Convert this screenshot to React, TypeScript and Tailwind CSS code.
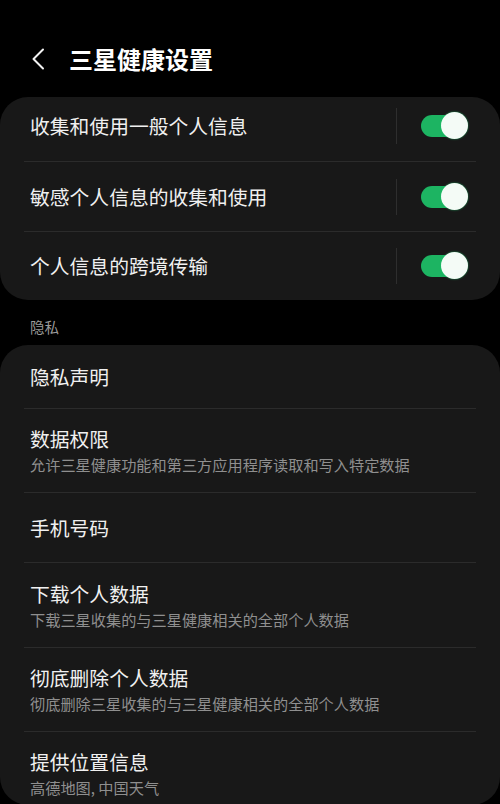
import React from "react";

const font = { fontFamily: '"Noto Sans CJK SC", "Noto Sans", sans-serif' };

function Toggle() {
  return (
    <div className="relative w-[46px] h-[26px] flex items-center">
      <div className="w-[44px] h-[22px] rounded-full bg-[#1db462]" />
      <div className="absolute right-[-1px] top-[-1px] w-[27px] h-[27px] rounded-full bg-[#f4fbf6] shadow-[0_0_2px_rgba(30,200,110,0.8)]" />
    </div>
  );
}

function Divider() {
  return <div className="mx-[24px] h-px bg-[#2b2b2b]" />;
}

function ToggleRow({ label, h, pad }: { label: string; h: string; pad: string }) {
  return (
    <div className={`flex items-center pl-[30px] pr-[33px] ${h} ${pad}`}>
      <div className="flex-1 text-[19.8px] text-[#f0f0f0] leading-none">{label}</div>
      <div className="w-px h-[36px] bg-[#2e2e2e] mr-[24px]" />
      <Toggle />
    </div>
  );
}

function Item({ title, sub, h }: { title: string; sub?: string; h: string }) {
  return (
    <div className={`flex flex-col justify-center pl-[30px] pr-[24px] ${h}`}>
      <div className="text-[19.8px] text-[#f0f0f0] leading-[24px]">{title}</div>
      {sub && <div className="text-[15.2px] text-[#8f8f8f] leading-[20px] mt-[3px]">{sub}</div>}
    </div>
  );
}

export default function App() {
  return (
    <div className="w-[500px] h-[804px] bg-black overflow-hidden" style={font}>
      <div className="h-[97px] flex items-start pt-[42px]">
        <div className="pl-[31px] pt-[6px] w-[69px]">
          <svg width="14" height="22" viewBox="0 0 14 22" fill="none">
            <path d="M12 1.5 L2.5 11 L12 20.5" stroke="#f2f2f2" strokeWidth="2" strokeLinecap="round" strokeLinejoin="round" />
          </svg>
        </div>
        <div className="text-[24px] font-bold text-white leading-[34px]">三星健康设置</div>
      </div>

      <div className="bg-[#181818] rounded-[28px]">
        <ToggleRow label="收集和使用一般个人信息" h="h-[64px]" pad="pb-[6px]" />
        <Divider />
        <ToggleRow label="敏感个人信息的收集和使用" h="h-[69px]" pad="" />
        <Divider />
        <ToggleRow label="个人信息的跨境传输" h="h-[68px]" pad="" />
      </div>

      <div className="h-[45px] pl-[30px] pt-[17px] text-[14.5px] text-[#9a9a9a] leading-[20px]">隐私</div>

      <div className="bg-[#181818] rounded-[28px] h-[460px]">
        <Item title="隐私声明" h="h-[63px]" />
        <Divider />
        <Item title="数据权限" sub="允许三星健康功能和第三方应用程序读取和写入特定数据" h="h-[83px]" />
        <Divider />
        <Item title="手机号码" h="h-[69px]" />
        <Divider />
        <Item title="下载个人数据" sub="下载三星收集的与三星健康相关的全部个人数据" h="h-[84px]" />
        <Divider />
        <Item title="彻底删除个人数据" sub="彻底删除三星收集的与三星健康相关的全部个人数据" h="h-[83px]" />
        <Divider />
        <Item title="提供位置信息" sub="高德地图, 中国天气" h="h-[83px]" />
      </div>
    </div>
  );
}
